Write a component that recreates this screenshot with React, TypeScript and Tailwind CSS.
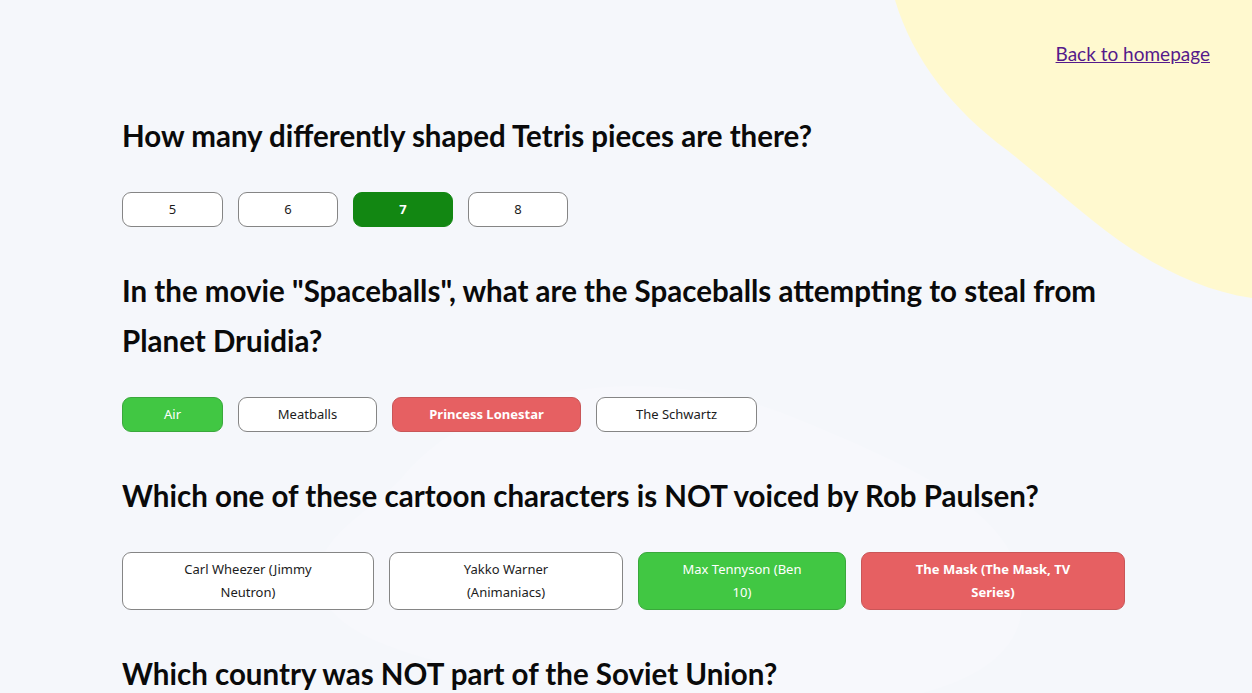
import React from "react";

type Variant = "plain" | "dark" | "correct" | "wrong";

const variantCls: Record<Variant, string> = {
  plain: "bg-white text-[#1c1c1c] border-[#858585] font-normal",
  dark: "bg-[#128712] text-white border-[#128712] font-bold",
  correct: "bg-[#41c743] text-white border-[#3aa83c] font-normal",
  wrong: "bg-[#e66062] text-white border-[#c95658] font-bold",
};

function Opt({
  v = "plain",
  w,
  lines,
}: {
  v?: Variant;
  w: string;
  lines: string[];
}) {
  return (
    <button
      className={`${w} ${variantCls[v]} shrink-0 rounded-[9px] border py-[5px] text-center text-[13px] leading-[23px]`}
      style={{ fontFamily: '"Noto Sans", "Open Sans", sans-serif' }}
    >
      {lines.map((l, i) => (
        <span key={i} className="block whitespace-nowrap">
          {l}
        </span>
      ))}
    </button>
  );
}

function Q({ lines }: { lines: string[] }) {
  return (
    <h2
      className="text-[29.5px] font-bold leading-[50px] text-[#0a0a0a]"
      style={{ fontFamily: 'Lato, "Noto Sans", sans-serif' }}
    >
      {lines.map((l, i) => (
        <span key={i} className="block whitespace-nowrap">
          {l}
        </span>
      ))}
    </h2>
  );
}

export default function App() {
  return (
    <div className="relative h-[693px] w-full overflow-hidden bg-[#f5f7fb]">
      <svg
        className="absolute right-0 top-0"
        width="357"
        height="300"
        viewBox="0 0 357 300"
      >
        <path
          d="M0 0 C 18 60, 58 110, 112 150 C 160 188, 198 224, 238 250 C 275 274, 315 292, 357 298 L357 0 Z"
          fill="#fff9cf"
        />
      </svg>
      <svg
        className="absolute left-[280px] top-[360px]"
        width="800"
        height="340"
        viewBox="0 0 800 340"
      >
        <path
          d="M120 120 C 200 20, 380 0, 520 60 C 640 110, 760 160, 740 260 C 720 340, 560 360, 400 340 C 240 320, 60 300, 40 230 C 30 180, 80 160, 120 120 Z"
          fill="#f7f8fc"
        />
      </svg>

      <div className="relative flex flex-col">
        <div className="flex justify-end pr-[42px] pt-[40px]">
          <a
            href="#"
            className="text-[19px] leading-[28px] text-[#551a8b] underline"
            style={{ fontFamily: 'Lato, "Noto Sans", sans-serif' }}
          >
            Back to homepage
          </a>
        </div>

        <div className="mt-[43px] flex flex-col gap-[39px] pl-[122px]">
          <div className="flex flex-col gap-[31px]">
            <Q lines={["How many differently shaped Tetris pieces are there?"]} />
            <div className="flex gap-[15px]">
              <Opt w="w-[101px]" lines={["5"]} />
              <Opt w="w-[100px]" lines={["6"]} />
              <Opt v="dark" w="w-[100px]" lines={["7"]} />
              <Opt w="w-[100px]" lines={["8"]} />
            </div>
          </div>

          <div className="flex flex-col gap-[31px]">
            <Q
              lines={[
                'In the movie "Spaceballs", what are the Spaceballs attempting to steal from',
                "Planet Druidia?",
              ]}
            />
            <div className="flex gap-[15px]">
              <Opt v="correct" w="w-[101px]" lines={["Air"]} />
              <Opt w="w-[139px]" lines={["Meatballs"]} />
              <Opt v="wrong" w="w-[189px]" lines={["Princess Lonestar"]} />
              <Opt w="w-[161px]" lines={["The Schwartz"]} />
            </div>
          </div>

          <div className="flex flex-col gap-[31px]">
            <Q lines={["Which one of these cartoon characters is NOT voiced by Rob Paulsen?"]} />
            <div className="flex gap-[15px]">
              <Opt w="w-[252px]" lines={["Carl Wheezer (Jimmy", "Neutron)"]} />
              <Opt w="w-[234px]" lines={["Yakko Warner", "(Animaniacs)"]} />
              <Opt v="correct" w="w-[208px]" lines={["Max Tennyson (Ben", "10)"]} />
              <Opt v="wrong" w="w-[264px]" lines={["The Mask (The Mask, TV", "Series)"]} />
            </div>
          </div>

          <div className="flex flex-col gap-[31px]">
            <Q lines={["Which country was NOT part of the Soviet Union?"]} />
          </div>
        </div>
      </div>
    </div>
  );
}
